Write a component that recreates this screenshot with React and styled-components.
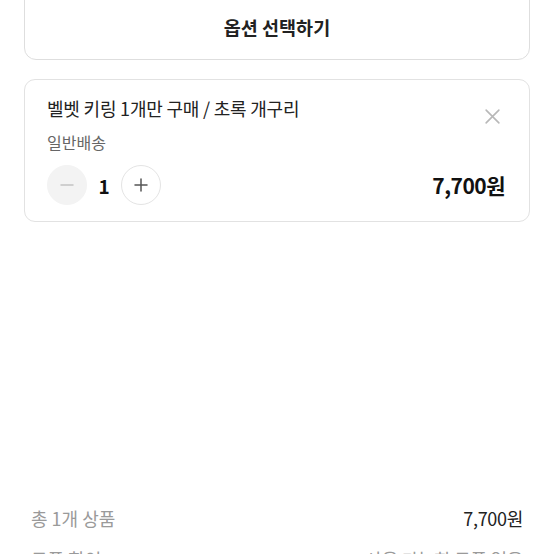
import React, { useState } from 'react'
import styled, { createGlobalStyle } from 'styled-components'

const GlobalStyle = createGlobalStyle`
  html, body {
    margin: 0;
    padding: 0;
    background: #fff;
    overflow: hidden;
  }
  body {
    font-family: "Noto Sans CJK KR", "Noto Sans", sans-serif;
    color: #222;
  }
`

const Page = styled.div`
  width: 554px;
  height: 554px;
  overflow: hidden;
  display: flex;
  flex-direction: column;
`

const Options = styled.div`
  padding: 0 24px;
  display: flex;
  flex-direction: column;
  gap: 19px;
  margin-top: -12px;
`

const SelectButton = styled.button`
  height: 72px;
  border: 1px solid #dedede;
  border-radius: 12px;
  background: #fff;
  font-family: inherit;
  font-size: 18.5px;
  font-weight: 700;
  color: #222;
  padding: 5px 0 0;
  cursor: pointer;
`

const OptionCard = styled.div`
  position: relative;
  border: 1px solid #e2e2e2;
  border-radius: 11px;
  padding: 15px 24px 16px 22px;
  display: flex;
  flex-direction: column;
`

const OptionName = styled.div`
  font-size: 18px;
  line-height: 26px;
  color: #222;
  letter-spacing: -0.2px;
`

const Delivery = styled.div`
  margin-top: 8px;
  font-size: 16px;
  line-height: 26px;
  color: #666;
`

const CloseButton = styled.button`
  position: absolute;
  top: 26px;
  right: 27px;
  width: 20px;
  height: 20px;
  padding: 0;
  border: none;
  background: none;
  display: flex;
  align-items: center;
  justify-content: center;
  cursor: pointer;
`

const Row = styled.div`
  margin-top: 10px;
  display: flex;
  align-items: center;
  justify-content: space-between;
`

const Stepper = styled.div`
  display: flex;
  align-items: center;
`

const StepButton = styled.button`
  width: 40px;
  height: 40px;
  border-radius: 50%;
  padding: 0;
  display: flex;
  align-items: center;
  justify-content: center;
  border: 1px solid ${p => (p.$disabled ? '#f3f3f3' : '#e4e4e4')};
  background: ${p => (p.$disabled ? '#f3f3f3' : '#fff')};
  cursor: pointer;
`

const Count = styled.span`
  width: 34px;
  text-align: center;
  font-size: 19px;
  font-weight: 700;
  color: #111;
`

const Price = styled.span`
  font-size: 21px;
  font-weight: 700;
  color: #111;
  letter-spacing: -0.5px;
`

const Summary = styled.div`
  margin-top: auto;
  padding: 0 31px;
  display: flex;
  flex-direction: column;
  gap: 19px;
  margin-bottom: -16px;
`

const SummaryRow = styled.div`
  display: flex;
  justify-content: space-between;
  align-items: center;
  line-height: 22px;
`

const Label = styled.span`
  font-size: 18px;
  color: #9a9a9a;
`

const Value = styled.span`
  font-size: 18px;
  color: ${p => (p.$muted ? '#9a9a9a' : '#222')};
  letter-spacing: -0.3px;
`

const Minus = ({ color }) => (
  <svg width="16" height="16" viewBox="0 0 16 16">
    <path d="M2 8h12" stroke={color} strokeWidth="1.5" strokeLinecap="round" />
  </svg>
)

const Plus = ({ color }) => (
  <svg width="16" height="16" viewBox="0 0 16 16">
    <path d="M2 8h12M8 2v12" stroke={color} strokeWidth="1.5" strokeLinecap="round" />
  </svg>
)

const App = () => {
  const [qty, setQty] = useState(1)
  const unit = 7700
  const total = (unit * qty).toLocaleString('ko-KR')

  return (
    <Page>
      <GlobalStyle />
      <Options>
        <SelectButton>옵션 선택하기</SelectButton>
        <OptionCard>
          <OptionName>벨벳 키링 1개만 구매 / 초록 개구리</OptionName>
          <Delivery>일반배송</Delivery>
          <CloseButton aria-label="삭제">
            <svg width="17" height="17" viewBox="0 0 16 16">
              <path d="M2 2l12 12M14 2L2 14" stroke="#b8b8b8" strokeWidth="1.5" strokeLinecap="round" />
            </svg>
          </CloseButton>
          <Row>
            <Stepper>
              <StepButton $disabled={qty <= 1} onClick={() => setQty(q => Math.max(1, q - 1))}>
                <Minus color="#c4c4c4" />
              </StepButton>
              <Count>{qty}</Count>
              <StepButton onClick={() => setQty(q => q + 1)}>
                <Plus color="#555" />
              </StepButton>
            </Stepper>
            <Price>{total}원</Price>
          </Row>
        </OptionCard>
      </Options>
      <Summary>
        <SummaryRow>
          <Label>총 {qty}개 상품</Label>
          <Value>{total}원</Value>
        </SummaryRow>
        <SummaryRow>
          <Label>쿠폰 할인</Label>
          <Value $muted>사용 가능한 쿠폰 없음</Value>
        </SummaryRow>
      </Summary>
    </Page>
  )
}

export default App
